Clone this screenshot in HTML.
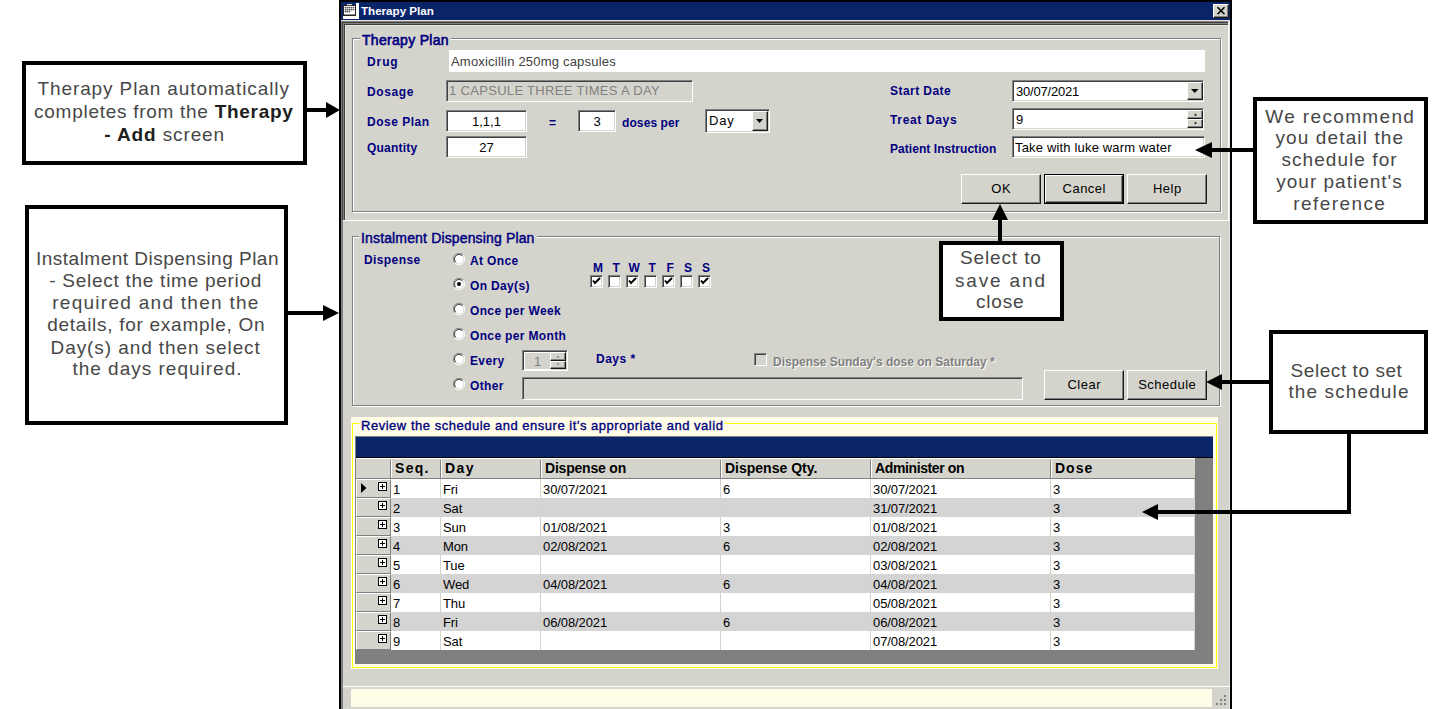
<!DOCTYPE html>
<html><head><meta charset="utf-8">
<style>
*{box-sizing:border-box;margin:0;padding:0}
html,body{width:1455px;height:709px;overflow:hidden;background:#fff}
body{position:relative;font-family:"Liberation Sans",sans-serif}
.a{position:absolute}
.t{position:absolute;white-space:pre;line-height:1}
.lbl{position:absolute;white-space:pre;line-height:1;color:#000080;font-weight:700;font-size:12px}
.sunk{position:absolute;background:#fff;border-top:1px solid #808080;border-left:1px solid #808080;border-bottom:1px solid #fff;border-right:1px solid #fff;box-shadow:inset 1px 1px 0 #404040, inset -1px -1px 0 #D5D4CC}
.btn{position:absolute;background:#D5D4CC;border-top:1px solid #fff;border-left:1px solid #fff;border-bottom:1px solid #1a1a1a;border-right:1px solid #1a1a1a;box-shadow:inset -1px -1px 0 #808080;font-size:13px;color:#000;text-align:center;letter-spacing:0.5px;text-indent:0.5px}
.etch{position:absolute;border:1px solid #808080;box-shadow:1px 1px 0 #fff, inset 1px 1px 0 #fff}
.ann{position:absolute;white-space:pre;color:#474747;font-size:19px;line-height:22px}
.ann b{color:#1e1e1e}
</style></head><body>

<!-- ============ WINDOW ============ -->
<div class="a" style="left:339px;top:0;width:893px;height:709px;background:#000"></div>
<div class="a" style="left:341px;top:2px;width:889px;height:707px;background:#D5D4CC"></div>
<!-- title bar -->
<div class="a" style="left:341px;top:2px;width:889px;height:18px;background:#0A246A"></div>
<svg class="a" style="left:343px;top:3px" width="16" height="16"><rect x="0" y="13" width="16" height="3" fill="#fff"/><rect x="13" y="0" width="3" height="16" fill="#fff"/><rect x="0" y="2" width="13" height="11" fill="#2a2020"/><rect x="1" y="3" width="11" height="8.5" fill="#fff"/><g fill="#555"><circle cx="2.5" cy="4.6" r="0.9"/><circle cx="4.5" cy="4.6" r="0.9"/><circle cx="6.5" cy="4.6" r="0.9"/><circle cx="8.5" cy="4.6" r="0.9"/><circle cx="10.5" cy="4.6" r="0.9"/><circle cx="2.5" cy="6.6" r="0.9"/><circle cx="4.5" cy="6.6" r="0.9"/><circle cx="6.5" cy="6.6" r="0.9"/><circle cx="8.5" cy="6.6" r="0.9"/><circle cx="10.5" cy="6.6" r="0.9"/><circle cx="2.5" cy="8.5" r="0.9"/><circle cx="4.5" cy="8.5" r="0.9"/><circle cx="6.5" cy="8.5" r="0.9"/></g><rect x="4" y="1" width="5" height="1.2" fill="#ddd"/></svg>
<div class="t" style="left:361px;top:5px;font-size:11.6px;font-weight:700;color:#fff;letter-spacing:0px">Therapy Plan</div>
<div class="btn" style="left:1213px;top:4px;width:16px;height:14px;"></div>
<svg class="a" style="left:1213px;top:4px" width="16" height="14"><path d="M4.5 3.2 L11.5 10.3 M11.5 3.2 L4.5 10.3" stroke="#000" stroke-width="1.6"/></svg>

<!-- top panel sunken frame -->
<div class="a" style="left:341px;top:20px;width:889px;height:1px;background:#E6E4DC"></div>
<div class="a" style="left:341px;top:21px;width:888px;height:199px;border-top:1px solid #808080;border-left:1px solid #808080;border-right:1px solid #fff;box-shadow:inset 1px 1px 0 #404040,inset 2px 2px 0 #808080,inset 3px 3px 0 #404040,inset 4px 4px 0 #E6E4DC"></div>
<div class="a" style="left:1229px;top:21px;width:1px;height:688px;background:#E6E4DC"></div>
<div class="a" style="left:343px;top:220px;width:887px;height:1px;background:#fff"></div>
<div class="a" style="left:341px;top:220px;width:2px;height:489px;background:#808080"></div>

<!-- ===== Therapy Plan group ===== -->
<div class="etch" style="left:352px;top:38px;width:869px;height:174px"></div>
<div class="t" style="left:360px;top:33px;padding:0 2px;background:#D5D4CC;color:#000080;font-size:14px;letter-spacing:0.3px;-webkit-text-stroke:0.6px #000080">Therapy Plan</div>

<div class="lbl" style="left:367px;top:56px;letter-spacing:0.9px">Drug</div>
<div class="a" style="left:449px;top:50px;width:756px;height:22px;background:#fff"></div>
<div class="t" style="left:451px;top:55px;font-size:13px;color:#404040;letter-spacing:0.2px">Amoxicillin 250mg capsules</div>

<div class="lbl" style="left:367px;top:86px;letter-spacing:0.6px">Dosage</div>
<div class="sunk" style="left:446px;top:80px;width:247px;height:22px;background:#D5D4CC"></div>
<div class="t" style="left:449px;top:84px;font-size:13px;color:#808080;letter-spacing:0.32px">1 CAPSULE THREE TIMES A DAY</div>

<div class="lbl" style="left:367px;top:116px;letter-spacing:0.5px">Dose Plan</div>
<div class="sunk" style="left:446px;top:110px;width:81px;height:22px"></div>
<div class="t" style="left:446px;top:115px;width:81px;text-align:center;font-size:13px">1,1,1</div>
<div class="lbl" style="left:549px;top:117px">=</div>
<div class="sunk" style="left:578px;top:110px;width:38px;height:22px"></div>
<div class="t" style="left:578px;top:115px;width:38px;text-align:center;font-size:13px">3</div>
<div class="lbl" style="left:622px;top:117px;letter-spacing:0.1px">doses per</div>
<div class="sunk" style="left:705px;top:109px;width:65px;height:24px"></div>
<div class="t" style="left:709px;top:114px;font-size:13px;letter-spacing:0.8px">Day</div>
<div class="btn" style="left:752px;top:111px;width:16px;height:20px"></div>
<svg class="a" style="left:752px;top:111px" width="16" height="20"><path d="M4 8 L11 8 L7.5 12 Z" fill="#000"/></svg>

<div class="lbl" style="left:367px;top:142px;letter-spacing:0.2px">Quantity</div>
<div class="sunk" style="left:446px;top:136px;width:81px;height:22px"></div>
<div class="t" style="left:446px;top:141px;width:81px;text-align:center;font-size:13px">27</div>

<div class="lbl" style="left:890px;top:85px;letter-spacing:0.45px">Start Date</div>
<div class="lbl" style="left:890px;top:114px;letter-spacing:0.65px">Treat Days</div>
<div class="lbl" style="left:890px;top:143px;letter-spacing:0.05px">Patient Instruction</div>

<div class="sunk" style="left:1012px;top:80px;width:192px;height:22px"></div>
<div class="t" style="left:1016px;top:85px;font-size:13px;letter-spacing:-0.2px">30/07/2021</div>
<div class="btn" style="left:1187px;top:82px;width:16px;height:18px"></div>
<svg class="a" style="left:1187px;top:82px" width="16" height="18"><path d="M4 7 L11.5 7 L7.75 11 Z" fill="#000"/></svg>

<div class="sunk" style="left:1012px;top:108px;width:192px;height:22px"></div>
<div class="t" style="left:1016px;top:113px;font-size:13px">9</div>
<div class="btn" style="left:1187px;top:110px;width:16px;height:9px"></div>
<div class="btn" style="left:1187px;top:119px;width:16px;height:9px"></div>
<svg class="a" style="left:1187px;top:110px" width="16" height="18"><path d="M7 5.5 L10 5.5 L8.5 3.5 Z M7 12.5 L10 12.5 L8.5 14.5 Z" fill="#000"/></svg>

<div class="sunk" style="left:1012px;top:136px;width:193px;height:22px"></div>
<div class="t" style="left:1015px;top:141px;font-size:13px;letter-spacing:0.17px">Take with luke warm water</div>

<div class="btn" style="left:961px;top:174px;width:80px;height:30px;line-height:28px">OK</div>
<div class="a" style="left:1044px;top:174px;width:80px;height:30px;border:1px solid #000"></div>
<div class="btn" style="left:1045px;top:175px;width:78px;height:28px;line-height:26px">Cancel</div>
<div class="btn" style="left:1127px;top:174px;width:80px;height:30px;line-height:28px">Help</div>

<!-- ===== Instalment group ===== -->
<div class="etch" style="left:352px;top:236px;width:868px;height:170px"></div>
<div class="t" style="left:359px;top:231px;padding:0 2px;background:#D5D4CC;color:#000080;font-size:14px;letter-spacing:0.15px;-webkit-text-stroke:0.45px #000080">Instalment Dispensing Plan</div>
<div class="lbl" style="left:364px;top:254px;letter-spacing:0.4px">Dispense</div>


<svg class="a" style="left:453px;top:253px" width="12" height="12"><circle cx="6" cy="6" r="5.5" fill="#D5D4CC"/><path d="M10.3 2.2 A5.5 5.5 0 0 0 1.7 9.8" stroke="#808080" stroke-width="1" fill="none"/><path d="M1.7 9.8 A5.5 5.5 0 0 0 10.3 2.2" stroke="#fff" stroke-width="1" fill="none"/><circle cx="6" cy="6" r="4.5" fill="#fff"/><path d="M9.2 2.8 A4.5 4.5 0 0 0 2.8 9.2" stroke="#404040" stroke-width="1" fill="none"/></svg>
<div class="lbl" style="left:470px;top:255px;letter-spacing:0.35px">At Once</div>
<svg class="a" style="left:453px;top:278px" width="12" height="12"><circle cx="6" cy="6" r="5.5" fill="#D5D4CC"/><path d="M10.3 2.2 A5.5 5.5 0 0 0 1.7 9.8" stroke="#808080" stroke-width="1" fill="none"/><path d="M1.7 9.8 A5.5 5.5 0 0 0 10.3 2.2" stroke="#fff" stroke-width="1" fill="none"/><circle cx="6" cy="6" r="4.5" fill="#fff"/><path d="M9.2 2.8 A4.5 4.5 0 0 0 2.8 9.2" stroke="#404040" stroke-width="1" fill="none"/><circle cx="6" cy="6" r="2" fill="#000"/></svg>
<div class="lbl" style="left:470px;top:280px;letter-spacing:0.35px">On Day(s)</div>
<svg class="a" style="left:453px;top:303px" width="12" height="12"><circle cx="6" cy="6" r="5.5" fill="#D5D4CC"/><path d="M10.3 2.2 A5.5 5.5 0 0 0 1.7 9.8" stroke="#808080" stroke-width="1" fill="none"/><path d="M1.7 9.8 A5.5 5.5 0 0 0 10.3 2.2" stroke="#fff" stroke-width="1" fill="none"/><circle cx="6" cy="6" r="4.5" fill="#fff"/><path d="M9.2 2.8 A4.5 4.5 0 0 0 2.8 9.2" stroke="#404040" stroke-width="1" fill="none"/></svg>
<div class="lbl" style="left:470px;top:305px;letter-spacing:0.35px">Once per Week</div>
<svg class="a" style="left:453px;top:328px" width="12" height="12"><circle cx="6" cy="6" r="5.5" fill="#D5D4CC"/><path d="M10.3 2.2 A5.5 5.5 0 0 0 1.7 9.8" stroke="#808080" stroke-width="1" fill="none"/><path d="M1.7 9.8 A5.5 5.5 0 0 0 10.3 2.2" stroke="#fff" stroke-width="1" fill="none"/><circle cx="6" cy="6" r="4.5" fill="#fff"/><path d="M9.2 2.8 A4.5 4.5 0 0 0 2.8 9.2" stroke="#404040" stroke-width="1" fill="none"/></svg>
<div class="lbl" style="left:470px;top:330px;letter-spacing:0.35px">Once per Month</div>
<svg class="a" style="left:453px;top:353px" width="12" height="12"><circle cx="6" cy="6" r="5.5" fill="#D5D4CC"/><path d="M10.3 2.2 A5.5 5.5 0 0 0 1.7 9.8" stroke="#808080" stroke-width="1" fill="none"/><path d="M1.7 9.8 A5.5 5.5 0 0 0 10.3 2.2" stroke="#fff" stroke-width="1" fill="none"/><circle cx="6" cy="6" r="4.5" fill="#fff"/><path d="M9.2 2.8 A4.5 4.5 0 0 0 2.8 9.2" stroke="#404040" stroke-width="1" fill="none"/></svg>
<div class="lbl" style="left:470px;top:355px;letter-spacing:0.35px">Every</div>
<svg class="a" style="left:453px;top:378px" width="12" height="12"><circle cx="6" cy="6" r="5.5" fill="#D5D4CC"/><path d="M10.3 2.2 A5.5 5.5 0 0 0 1.7 9.8" stroke="#808080" stroke-width="1" fill="none"/><path d="M1.7 9.8 A5.5 5.5 0 0 0 10.3 2.2" stroke="#fff" stroke-width="1" fill="none"/><circle cx="6" cy="6" r="4.5" fill="#fff"/><path d="M9.2 2.8 A4.5 4.5 0 0 0 2.8 9.2" stroke="#404040" stroke-width="1" fill="none"/></svg>
<div class="lbl" style="left:470px;top:380px;letter-spacing:0.35px">Other</div>
<div class="lbl" style="left:588.6px;top:262px;width:19px;text-align:center">M</div>
<div class="sunk" style="left:590px;top:275px;width:13px;height:13px"></div>
<svg class="a" style="left:590px;top:275px" width="13" height="13"><path d="M3 5.5 L5 8 L10 3" stroke="#000" stroke-width="2" fill="none"/></svg>
<div class="lbl" style="left:606.6px;top:262px;width:19px;text-align:center">T</div>
<div class="sunk" style="left:608px;top:275px;width:13px;height:13px"></div>
<div class="lbl" style="left:624.6px;top:262px;width:19px;text-align:center">W</div>
<div class="sunk" style="left:626px;top:275px;width:13px;height:13px"></div>
<svg class="a" style="left:626px;top:275px" width="13" height="13"><path d="M3 5.5 L5 8 L10 3" stroke="#000" stroke-width="2" fill="none"/></svg>
<div class="lbl" style="left:642.6px;top:262px;width:19px;text-align:center">T</div>
<div class="sunk" style="left:644px;top:275px;width:13px;height:13px"></div>
<div class="lbl" style="left:660.6px;top:262px;width:19px;text-align:center">F</div>
<div class="sunk" style="left:662px;top:275px;width:13px;height:13px"></div>
<svg class="a" style="left:662px;top:275px" width="13" height="13"><path d="M3 5.5 L5 8 L10 3" stroke="#000" stroke-width="2" fill="none"/></svg>
<div class="lbl" style="left:678.6px;top:262px;width:19px;text-align:center">S</div>
<div class="sunk" style="left:680px;top:275px;width:13px;height:13px"></div>
<div class="lbl" style="left:696.6px;top:262px;width:19px;text-align:center">S</div>
<div class="sunk" style="left:698px;top:275px;width:13px;height:13px"></div>
<svg class="a" style="left:698px;top:275px" width="13" height="13"><path d="M3 5.5 L5 8 L10 3" stroke="#000" stroke-width="2" fill="none"/></svg>

<div class="sunk" style="left:522px;top:350px;width:46px;height:21px;background:#D5D4CC"></div>
<div class="a" style="left:524px;top:352px;width:27px;height:18px;border:1px solid #fff;border-right:0"></div>
<div class="t" style="left:524px;top:355px;width:27px;text-align:center;font-size:13px;color:#808080">1</div>
<div class="btn" style="left:550px;top:352px;width:16px;height:9px"></div>
<div class="btn" style="left:550px;top:361px;width:16px;height:8px"></div>
<svg class="a" style="left:550px;top:352px" width="16" height="17"><path d="M6.5 5.5 L9.5 5.5 L8 3.5 Z M6.5 11.5 L9.5 11.5 L8 13.5 Z" fill="#808080"/></svg>
<div class="lbl" style="left:596px;top:353px;letter-spacing:0.5px">Days *</div>
<div class="sunk" style="left:754px;top:353px;width:13px;height:13px;background:#D5D4CC"></div>
<div class="lbl" style="left:773px;top:356px;color:#808080;text-shadow:1px 1px 0 #fff">Dispense Sunday's dose on Saturday *</div>
<div class="sunk" style="left:522px;top:377px;width:501px;height:23px;background:#D5D4CC"></div>
<div class="btn" style="left:1044px;top:370px;width:80px;height:30px;line-height:28px">Clear</div>
<div class="btn" style="left:1127px;top:370px;width:80px;height:30px;line-height:28px">Schedule</div>


<div class="a" style="left:351px;top:417px;width:867px;height:252px;background:#FFFDE8"></div>
<div class="a" style="left:352px;top:423px;width:865px;height:245px;border:1px solid #FFFF00;box-shadow:inset 1px 1px 0 #fff"></div>
<div class="t" style="left:359px;top:419px;padding:0 2px;background:#FFFDE8;color:#000080;font-size:13px;letter-spacing:0.52px;-webkit-text-stroke:0.35px #000080">Review the schedule and ensure it's appropriate and valid</div>
<div class="a" style="left:355px;top:436px;width:858px;height:228px;background:#808080"></div>
<div class="a" style="left:356px;top:437px;width:857px;height:20px;background:#0A246A"></div>
<div class="a" style="left:356px;top:457px;width:857px;height:1px;background:#000"></div>

<div class="a" style="left:356px;top:458px;width:839px;height:21px;background:#D5D4CC;border-top:1px solid #fff;border-bottom:1px solid #808080"></div>
<div class="a" style="left:390px;top:460px;width:1px;height:18px;background:#808080"></div><div class="a" style="left:391px;top:460px;width:1px;height:18px;background:#fff"></div>
<div class="a" style="left:440px;top:460px;width:1px;height:18px;background:#808080"></div><div class="a" style="left:441px;top:460px;width:1px;height:18px;background:#fff"></div>
<div class="t" style="left:395px;top:461px;font-size:14px;font-weight:700;color:#000;letter-spacing:1.3px">Seq.</div>
<div class="a" style="left:540px;top:460px;width:1px;height:18px;background:#808080"></div><div class="a" style="left:541px;top:460px;width:1px;height:18px;background:#fff"></div>
<div class="t" style="left:445px;top:461px;font-size:14px;font-weight:700;color:#000;letter-spacing:1.4px">Day</div>
<div class="a" style="left:720px;top:460px;width:1px;height:18px;background:#808080"></div><div class="a" style="left:721px;top:460px;width:1px;height:18px;background:#fff"></div>
<div class="t" style="left:545px;top:461px;font-size:14px;font-weight:700;color:#000;letter-spacing:-0.2px">Dispense on</div>
<div class="a" style="left:870px;top:460px;width:1px;height:18px;background:#808080"></div><div class="a" style="left:871px;top:460px;width:1px;height:18px;background:#fff"></div>
<div class="t" style="left:725px;top:461px;font-size:14px;font-weight:700;color:#000;letter-spacing:0.0px">Dispense Qty.</div>
<div class="a" style="left:1050px;top:460px;width:1px;height:18px;background:#808080"></div><div class="a" style="left:1051px;top:460px;width:1px;height:18px;background:#fff"></div>
<div class="t" style="left:875px;top:461px;font-size:14px;font-weight:700;color:#000;letter-spacing:-0.38px">Administer on</div>
<div class="t" style="left:1055px;top:461px;font-size:14px;font-weight:700;color:#000;letter-spacing:1.0px">Dose</div>
<div class="a" style="left:356px;top:479px;width:35px;height:19px;background:#D5D4CC;border-top:1px solid #fff;border-left:1px solid #fff;border-right:1px solid #808080;border-bottom:1px solid #808080"></div>
<div class="a" style="left:391px;top:479px;width:804px;height:19px;background:#fff"></div>
<div class="a" style="left:440px;top:479px;width:1px;height:19px;background:#D5D4CC"></div>
<div class="a" style="left:540px;top:479px;width:1px;height:19px;background:#D5D4CC"></div>
<div class="a" style="left:720px;top:479px;width:1px;height:19px;background:#D5D4CC"></div>
<div class="a" style="left:870px;top:479px;width:1px;height:19px;background:#D5D4CC"></div>
<div class="a" style="left:1050px;top:479px;width:1px;height:19px;background:#D5D4CC"></div>
<div class="a" style="left:1194px;top:479px;width:1px;height:19px;background:#D5D4CC"></div>
<svg class="a" style="left:378px;top:482px" width="9" height="9"><rect x="0.5" y="0.5" width="8" height="8" fill="#fff" stroke="#000"/><path d="M2 4.5 H7 M4.5 2 V7" stroke="#000"/></svg>
<svg class="a" style="left:361px;top:483px" width="6" height="10"><path d="M0 0 L5.5 5 L0 10 Z" fill="#000"/></svg>
<div class="t" style="left:393px;top:483px;font-size:13px;color:#000;letter-spacing:-0.1px">1</div>
<div class="t" style="left:443px;top:483px;font-size:13px;color:#000;letter-spacing:-0.1px">Fri</div>
<div class="t" style="left:543px;top:483px;font-size:13px;color:#000;letter-spacing:-0.1px">30/07/2021</div>
<div class="t" style="left:723px;top:483px;font-size:13px;color:#000;letter-spacing:-0.1px">6</div>
<div class="t" style="left:873px;top:483px;font-size:13px;color:#000;letter-spacing:-0.1px">30/07/2021</div>
<div class="t" style="left:1053px;top:483px;font-size:13px;color:#000;letter-spacing:-0.1px">3</div>
<div class="a" style="left:356px;top:498px;width:35px;height:19px;background:#D5D4CC;border-top:1px solid #fff;border-left:1px solid #fff;border-right:1px solid #808080;border-bottom:1px solid #808080"></div>
<div class="a" style="left:391px;top:498px;width:804px;height:19px;background:#D4D4D4"></div>
<div class="a" style="left:440px;top:498px;width:1px;height:19px;background:#D5D4CC"></div>
<div class="a" style="left:540px;top:498px;width:1px;height:19px;background:#D5D4CC"></div>
<div class="a" style="left:720px;top:498px;width:1px;height:19px;background:#D5D4CC"></div>
<div class="a" style="left:870px;top:498px;width:1px;height:19px;background:#D5D4CC"></div>
<div class="a" style="left:1050px;top:498px;width:1px;height:19px;background:#D5D4CC"></div>
<div class="a" style="left:1194px;top:498px;width:1px;height:19px;background:#D5D4CC"></div>
<svg class="a" style="left:378px;top:501px" width="9" height="9"><rect x="0.5" y="0.5" width="8" height="8" fill="#fff" stroke="#000"/><path d="M2 4.5 H7 M4.5 2 V7" stroke="#000"/></svg>
<div class="t" style="left:393px;top:502px;font-size:13px;color:#000;letter-spacing:-0.1px">2</div>
<div class="t" style="left:443px;top:502px;font-size:13px;color:#000;letter-spacing:-0.1px">Sat</div>
<div class="t" style="left:873px;top:502px;font-size:13px;color:#000;letter-spacing:-0.1px">31/07/2021</div>
<div class="t" style="left:1053px;top:502px;font-size:13px;color:#000;letter-spacing:-0.1px">3</div>
<div class="a" style="left:356px;top:517px;width:35px;height:19px;background:#D5D4CC;border-top:1px solid #fff;border-left:1px solid #fff;border-right:1px solid #808080;border-bottom:1px solid #808080"></div>
<div class="a" style="left:391px;top:517px;width:804px;height:19px;background:#fff"></div>
<div class="a" style="left:440px;top:517px;width:1px;height:19px;background:#D5D4CC"></div>
<div class="a" style="left:540px;top:517px;width:1px;height:19px;background:#D5D4CC"></div>
<div class="a" style="left:720px;top:517px;width:1px;height:19px;background:#D5D4CC"></div>
<div class="a" style="left:870px;top:517px;width:1px;height:19px;background:#D5D4CC"></div>
<div class="a" style="left:1050px;top:517px;width:1px;height:19px;background:#D5D4CC"></div>
<div class="a" style="left:1194px;top:517px;width:1px;height:19px;background:#D5D4CC"></div>
<svg class="a" style="left:378px;top:520px" width="9" height="9"><rect x="0.5" y="0.5" width="8" height="8" fill="#fff" stroke="#000"/><path d="M2 4.5 H7 M4.5 2 V7" stroke="#000"/></svg>
<div class="t" style="left:393px;top:521px;font-size:13px;color:#000;letter-spacing:-0.1px">3</div>
<div class="t" style="left:443px;top:521px;font-size:13px;color:#000;letter-spacing:-0.1px">Sun</div>
<div class="t" style="left:543px;top:521px;font-size:13px;color:#000;letter-spacing:-0.1px">01/08/2021</div>
<div class="t" style="left:723px;top:521px;font-size:13px;color:#000;letter-spacing:-0.1px">3</div>
<div class="t" style="left:873px;top:521px;font-size:13px;color:#000;letter-spacing:-0.1px">01/08/2021</div>
<div class="t" style="left:1053px;top:521px;font-size:13px;color:#000;letter-spacing:-0.1px">3</div>
<div class="a" style="left:356px;top:536px;width:35px;height:19px;background:#D5D4CC;border-top:1px solid #fff;border-left:1px solid #fff;border-right:1px solid #808080;border-bottom:1px solid #808080"></div>
<div class="a" style="left:391px;top:536px;width:804px;height:19px;background:#D4D4D4"></div>
<div class="a" style="left:440px;top:536px;width:1px;height:19px;background:#D5D4CC"></div>
<div class="a" style="left:540px;top:536px;width:1px;height:19px;background:#D5D4CC"></div>
<div class="a" style="left:720px;top:536px;width:1px;height:19px;background:#D5D4CC"></div>
<div class="a" style="left:870px;top:536px;width:1px;height:19px;background:#D5D4CC"></div>
<div class="a" style="left:1050px;top:536px;width:1px;height:19px;background:#D5D4CC"></div>
<div class="a" style="left:1194px;top:536px;width:1px;height:19px;background:#D5D4CC"></div>
<svg class="a" style="left:378px;top:539px" width="9" height="9"><rect x="0.5" y="0.5" width="8" height="8" fill="#fff" stroke="#000"/><path d="M2 4.5 H7 M4.5 2 V7" stroke="#000"/></svg>
<div class="t" style="left:393px;top:540px;font-size:13px;color:#000;letter-spacing:-0.1px">4</div>
<div class="t" style="left:443px;top:540px;font-size:13px;color:#000;letter-spacing:-0.1px">Mon</div>
<div class="t" style="left:543px;top:540px;font-size:13px;color:#000;letter-spacing:-0.1px">02/08/2021</div>
<div class="t" style="left:723px;top:540px;font-size:13px;color:#000;letter-spacing:-0.1px">6</div>
<div class="t" style="left:873px;top:540px;font-size:13px;color:#000;letter-spacing:-0.1px">02/08/2021</div>
<div class="t" style="left:1053px;top:540px;font-size:13px;color:#000;letter-spacing:-0.1px">3</div>
<div class="a" style="left:356px;top:555px;width:35px;height:19px;background:#D5D4CC;border-top:1px solid #fff;border-left:1px solid #fff;border-right:1px solid #808080;border-bottom:1px solid #808080"></div>
<div class="a" style="left:391px;top:555px;width:804px;height:19px;background:#fff"></div>
<div class="a" style="left:440px;top:555px;width:1px;height:19px;background:#D5D4CC"></div>
<div class="a" style="left:540px;top:555px;width:1px;height:19px;background:#D5D4CC"></div>
<div class="a" style="left:720px;top:555px;width:1px;height:19px;background:#D5D4CC"></div>
<div class="a" style="left:870px;top:555px;width:1px;height:19px;background:#D5D4CC"></div>
<div class="a" style="left:1050px;top:555px;width:1px;height:19px;background:#D5D4CC"></div>
<div class="a" style="left:1194px;top:555px;width:1px;height:19px;background:#D5D4CC"></div>
<svg class="a" style="left:378px;top:558px" width="9" height="9"><rect x="0.5" y="0.5" width="8" height="8" fill="#fff" stroke="#000"/><path d="M2 4.5 H7 M4.5 2 V7" stroke="#000"/></svg>
<div class="t" style="left:393px;top:559px;font-size:13px;color:#000;letter-spacing:-0.1px">5</div>
<div class="t" style="left:443px;top:559px;font-size:13px;color:#000;letter-spacing:-0.1px">Tue</div>
<div class="t" style="left:873px;top:559px;font-size:13px;color:#000;letter-spacing:-0.1px">03/08/2021</div>
<div class="t" style="left:1053px;top:559px;font-size:13px;color:#000;letter-spacing:-0.1px">3</div>
<div class="a" style="left:356px;top:574px;width:35px;height:19px;background:#D5D4CC;border-top:1px solid #fff;border-left:1px solid #fff;border-right:1px solid #808080;border-bottom:1px solid #808080"></div>
<div class="a" style="left:391px;top:574px;width:804px;height:19px;background:#D4D4D4"></div>
<div class="a" style="left:440px;top:574px;width:1px;height:19px;background:#D5D4CC"></div>
<div class="a" style="left:540px;top:574px;width:1px;height:19px;background:#D5D4CC"></div>
<div class="a" style="left:720px;top:574px;width:1px;height:19px;background:#D5D4CC"></div>
<div class="a" style="left:870px;top:574px;width:1px;height:19px;background:#D5D4CC"></div>
<div class="a" style="left:1050px;top:574px;width:1px;height:19px;background:#D5D4CC"></div>
<div class="a" style="left:1194px;top:574px;width:1px;height:19px;background:#D5D4CC"></div>
<svg class="a" style="left:378px;top:577px" width="9" height="9"><rect x="0.5" y="0.5" width="8" height="8" fill="#fff" stroke="#000"/><path d="M2 4.5 H7 M4.5 2 V7" stroke="#000"/></svg>
<div class="t" style="left:393px;top:578px;font-size:13px;color:#000;letter-spacing:-0.1px">6</div>
<div class="t" style="left:443px;top:578px;font-size:13px;color:#000;letter-spacing:-0.1px">Wed</div>
<div class="t" style="left:543px;top:578px;font-size:13px;color:#000;letter-spacing:-0.1px">04/08/2021</div>
<div class="t" style="left:723px;top:578px;font-size:13px;color:#000;letter-spacing:-0.1px">6</div>
<div class="t" style="left:873px;top:578px;font-size:13px;color:#000;letter-spacing:-0.1px">04/08/2021</div>
<div class="t" style="left:1053px;top:578px;font-size:13px;color:#000;letter-spacing:-0.1px">3</div>
<div class="a" style="left:356px;top:593px;width:35px;height:19px;background:#D5D4CC;border-top:1px solid #fff;border-left:1px solid #fff;border-right:1px solid #808080;border-bottom:1px solid #808080"></div>
<div class="a" style="left:391px;top:593px;width:804px;height:19px;background:#fff"></div>
<div class="a" style="left:440px;top:593px;width:1px;height:19px;background:#D5D4CC"></div>
<div class="a" style="left:540px;top:593px;width:1px;height:19px;background:#D5D4CC"></div>
<div class="a" style="left:720px;top:593px;width:1px;height:19px;background:#D5D4CC"></div>
<div class="a" style="left:870px;top:593px;width:1px;height:19px;background:#D5D4CC"></div>
<div class="a" style="left:1050px;top:593px;width:1px;height:19px;background:#D5D4CC"></div>
<div class="a" style="left:1194px;top:593px;width:1px;height:19px;background:#D5D4CC"></div>
<svg class="a" style="left:378px;top:596px" width="9" height="9"><rect x="0.5" y="0.5" width="8" height="8" fill="#fff" stroke="#000"/><path d="M2 4.5 H7 M4.5 2 V7" stroke="#000"/></svg>
<div class="t" style="left:393px;top:597px;font-size:13px;color:#000;letter-spacing:-0.1px">7</div>
<div class="t" style="left:443px;top:597px;font-size:13px;color:#000;letter-spacing:-0.1px">Thu</div>
<div class="t" style="left:873px;top:597px;font-size:13px;color:#000;letter-spacing:-0.1px">05/08/2021</div>
<div class="t" style="left:1053px;top:597px;font-size:13px;color:#000;letter-spacing:-0.1px">3</div>
<div class="a" style="left:356px;top:612px;width:35px;height:19px;background:#D5D4CC;border-top:1px solid #fff;border-left:1px solid #fff;border-right:1px solid #808080;border-bottom:1px solid #808080"></div>
<div class="a" style="left:391px;top:612px;width:804px;height:19px;background:#D4D4D4"></div>
<div class="a" style="left:440px;top:612px;width:1px;height:19px;background:#D5D4CC"></div>
<div class="a" style="left:540px;top:612px;width:1px;height:19px;background:#D5D4CC"></div>
<div class="a" style="left:720px;top:612px;width:1px;height:19px;background:#D5D4CC"></div>
<div class="a" style="left:870px;top:612px;width:1px;height:19px;background:#D5D4CC"></div>
<div class="a" style="left:1050px;top:612px;width:1px;height:19px;background:#D5D4CC"></div>
<div class="a" style="left:1194px;top:612px;width:1px;height:19px;background:#D5D4CC"></div>
<svg class="a" style="left:378px;top:615px" width="9" height="9"><rect x="0.5" y="0.5" width="8" height="8" fill="#fff" stroke="#000"/><path d="M2 4.5 H7 M4.5 2 V7" stroke="#000"/></svg>
<div class="t" style="left:393px;top:616px;font-size:13px;color:#000;letter-spacing:-0.1px">8</div>
<div class="t" style="left:443px;top:616px;font-size:13px;color:#000;letter-spacing:-0.1px">Fri</div>
<div class="t" style="left:543px;top:616px;font-size:13px;color:#000;letter-spacing:-0.1px">06/08/2021</div>
<div class="t" style="left:723px;top:616px;font-size:13px;color:#000;letter-spacing:-0.1px">6</div>
<div class="t" style="left:873px;top:616px;font-size:13px;color:#000;letter-spacing:-0.1px">06/08/2021</div>
<div class="t" style="left:1053px;top:616px;font-size:13px;color:#000;letter-spacing:-0.1px">3</div>
<div class="a" style="left:356px;top:631px;width:35px;height:19px;background:#D5D4CC;border-top:1px solid #fff;border-left:1px solid #fff;border-right:1px solid #808080;border-bottom:1px solid #808080"></div>
<div class="a" style="left:391px;top:631px;width:804px;height:19px;background:#fff"></div>
<div class="a" style="left:440px;top:631px;width:1px;height:19px;background:#D5D4CC"></div>
<div class="a" style="left:540px;top:631px;width:1px;height:19px;background:#D5D4CC"></div>
<div class="a" style="left:720px;top:631px;width:1px;height:19px;background:#D5D4CC"></div>
<div class="a" style="left:870px;top:631px;width:1px;height:19px;background:#D5D4CC"></div>
<div class="a" style="left:1050px;top:631px;width:1px;height:19px;background:#D5D4CC"></div>
<div class="a" style="left:1194px;top:631px;width:1px;height:19px;background:#D5D4CC"></div>
<svg class="a" style="left:378px;top:634px" width="9" height="9"><rect x="0.5" y="0.5" width="8" height="8" fill="#fff" stroke="#000"/><path d="M2 4.5 H7 M4.5 2 V7" stroke="#000"/></svg>
<div class="t" style="left:393px;top:635px;font-size:13px;color:#000;letter-spacing:-0.1px">9</div>
<div class="t" style="left:443px;top:635px;font-size:13px;color:#000;letter-spacing:-0.1px">Sat</div>
<div class="t" style="left:873px;top:635px;font-size:13px;color:#000;letter-spacing:-0.1px">07/08/2021</div>
<div class="t" style="left:1053px;top:635px;font-size:13px;color:#000;letter-spacing:-0.1px">3</div>

<div class="a" style="left:343px;top:686px;width:887px;height:1px;background:#fff"></div>
<div class="a" style="left:351px;top:689px;width:861px;height:18px;background:#FFFDE8"></div>
<svg class="a" style="left:1214px;top:693px" width="14" height="14"><g fill="#808080"><rect x="10" y="2" width="2" height="2"/><rect x="6" y="6" width="2" height="2"/><rect x="10" y="6" width="2" height="2"/><rect x="2" y="10" width="2" height="2"/><rect x="6" y="10" width="2" height="2"/><rect x="10" y="10" width="2" height="2"/></g></svg>


<div class="a" style="left:22px;top:61px;width:285px;height:104px;border:4px solid #000;background:#fff"></div>
<div class="a" style="left:25px;top:205px;width:263px;height:220px;border:4px solid #000;background:#fff"></div>
<div class="a" style="left:1253px;top:97px;width:175px;height:127px;border:4px solid #000;background:#fff"></div>
<div class="a" style="left:939px;top:241px;width:125px;height:80px;border:4px solid #000;background:#fff"></div>
<div class="a" style="left:1269px;top:330px;width:159px;height:104px;border:4px solid #000;background:#fff"></div>
<div class="t ann" style="left:37.50px;top:78.40px;letter-spacing:0.89px">Therapy Plan automatically</div>
<div class="t ann" style="left:34.10px;top:101.40px;letter-spacing:0.72px">completes from the <b>Therapy</b></div>
<div class="t ann" style="left:104.30px;top:124.30px;letter-spacing:0.88px"><b>- Add</b> screen</div>
<div class="t ann" style="left:36.00px;top:248.45px;letter-spacing:0.49px">Instalment Dispensing Plan</div>
<div class="t ann" style="left:49.25px;top:270.20px;letter-spacing:0.73px">- Select the time period</div>
<div class="t ann" style="left:52.20px;top:291.90px;letter-spacing:1.28px">required and then the</div>
<div class="t ann" style="left:47.30px;top:314.30px;letter-spacing:0.72px">details, for example, On</div>
<div class="t ann" style="left:50.60px;top:336.80px;letter-spacing:0.91px">Day(s) and then select</div>
<div class="t ann" style="left:72.40px;top:358.10px;letter-spacing:1.00px">the days required.</div>
<div class="t ann" style="left:1265.30px;top:105.60px;letter-spacing:1.35px">We recommend</div>
<div class="t ann" style="left:1275.40px;top:127.10px;letter-spacing:1.13px">you detail the</div>
<div class="t ann" style="left:1281.40px;top:149.10px;letter-spacing:1.07px">schedule for</div>
<div class="t ann" style="left:1276.30px;top:170.70px;letter-spacing:1.00px">your patient's</div>
<div class="t ann" style="left:1293.20px;top:193.10px;letter-spacing:1.43px">reference</div>
<div class="t ann" style="left:959.90px;top:247.40px;letter-spacing:0.89px">Select to</div>
<div class="t ann" style="left:954.90px;top:269.65px;letter-spacing:1.85px">save and</div>
<div class="t ann" style="left:976.10px;top:291.40px;letter-spacing:0.75px">close</div>
<div class="t ann" style="left:1290.50px;top:359.50px;letter-spacing:0.57px">Select to set</div>
<div class="t ann" style="left:1288.40px;top:381.30px;letter-spacing:1.12px">the schedule</div>
<svg class="a" style="left:0;top:0" width="1455" height="709">
 <g fill="#000" stroke="none">
  <rect x="307" y="108" width="20" height="4"/><path d="M326 102 L340 110 L326 118 Z"/>
  <rect x="288" y="311" width="36" height="4"/><path d="M323 305 L339 313 L323 321 Z"/>
  <rect x="1210" y="148" width="43" height="4"/><path d="M1212 142 L1195 150 L1212 158 Z"/>
  <rect x="998" y="219" width="4" height="22"/><path d="M992 220 L1000 204 L1008 220 Z"/>
  <rect x="1220" y="380" width="49" height="4"/><path d="M1222 374 L1206 382 L1222 390 Z"/>
  <rect x="1347" y="433" width="4" height="81"/><rect x="1157" y="510" width="194" height="4"/><path d="M1158 504 L1142 512 L1158 520 Z"/>
 </g>
</svg>
</body></html>
